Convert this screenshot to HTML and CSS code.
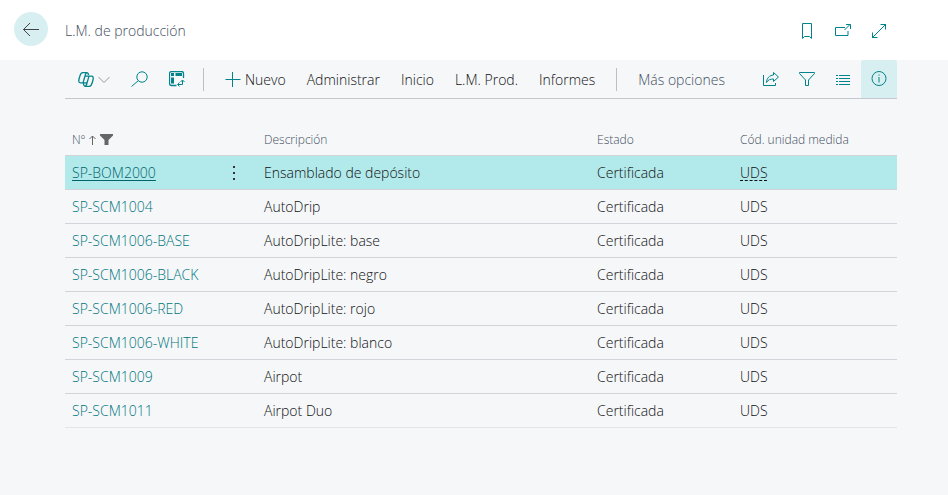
FILE: index.html
```html
<!DOCTYPE html>
<html lang="es">
<head>
	<meta charset="utf-8">
	<meta name="viewport" content="width=device-width, initial-scale=1.0">
	<title>L.M. de producción</title>
	<link rel="stylesheet" href="styles.css">
</head>
<body>
	<header class="page-header">
		<button class="back" aria-label="Atrás">
			<svg width="18" height="16" viewBox="0 0 18 16"><path d="M1.500 8.500H17M8 2L1.500 8.500L8 15"/></svg>
		</button>
		<h1 class="title">L.M. de producción</h1>
		<div class="header-actions">
			<button class="icon" aria-label="Marcador">
				<svg width="16" height="18" viewBox="0 0 16 18"><path d="M3.500 1.500h9v15L10.500 14.500h-5L3.500 16.500z"/></svg>
			</button>
			<button class="icon" aria-label="Abrir en ventana nueva">
				<svg width="16" height="16" viewBox="0 0 16 16"><path d="M10 4.500H.5v8h12.500V8M9.500 7L15 1.500M11 1.500h4.500V6"/></svg>
			</button>
			<button class="icon" aria-label="Expandir">
				<svg width="16" height="16" viewBox="0 0 16 16"><path d="M1 15L15 1M9.500 1.500h5v5M1.500 9.500v5h5"/></svg>
			</button>
		</div>
	</header>

	<main class="content">
		<div class="toolbar">
			<button class="icon copilot" aria-label="Copilot">
				<svg class="logo" width="16" height="15" viewBox="0 0 16 15"><path d="M10.500 3C10.300 1.300 9.800 .7 8.700 .7H4.800C3.200 .7 2.400 2 1.700 4.500C.6 8 0 10.800 2.500 10.800H4.300C5.300 10.800 5.500 9.500 6 7.500L7 4C7.500 2 8 .7 9 .7M5.500 11.500C5.700 13.500 6.200 14.300 7.300 14.300H11.200C12.800 14.300 13.600 13 14.300 10.500C15.400 7 16 4.200 13.500 4.200H11.700C10.700 4.200 10.500 5.500 10 7.500L9 11C8.500 13 8 14.300 7 14.300M7 4.200H11.700M4.300 10.800H9"/></svg>
				<svg class="chevron" width="12" height="8" viewBox="0 0 12 8"><path d="M.5 2L6 7.500L11.500 2"/></svg>
			</button>
			<button class="icon" aria-label="Buscar">
				<svg width="17" height="16" viewBox="0 0 17 16"><circle cx="11" cy="6" r="5.200"/><path d="M7.300 9.700L.5 15.500"/></svg>
			</button>
			<button class="icon" aria-label="Analizar">
				<svg width="16" height="16" viewBox="0 0 16 16"><path class="frame" d="M7.500 14.500H2.500a2 2 0 0 1-2-2V2.500a2 2 0 0 1 2-2h10a2 2 0 0 1 2 2V7"/><path class="solid" d="M2 2h3v3H2zM6.500 2h6.500v3H6.500zM2 6.500h3v6H2z"/><path d="M13.500 9.500v4H9M11.500 11l2-2l2 2M10.500 11.500l-2 2l2 2"/></svg>
			</button>
			<span class="divider start"></span>
			<button class="action new">
				<svg width="16" height="16" viewBox="0 0 16 16"><path d="M.5 7.500h15M7.500 0v15"/></svg>
				Nuevo
			</button>
			<button class="action">Administrar</button>
			<button class="action">Inicio</button>
			<button class="action">L.M. Prod.</button>
			<button class="action">Informes</button>
			<span class="divider"></span>
			<button class="action more">Más opciones</button>
			<div class="toolbar-right">
				<button class="icon" aria-label="Compartir">
					<svg width="16" height="16" viewBox="0 0 16 16"><path d="M.5 4v10.500h12V12M10.500 1.500L15.500 6L10.500 10.500V8C7.500 8 5 8.700 3.500 11.500C3.800 7 6.500 4.300 10.500 4z"/></svg>
				</button>
				<button class="icon" aria-label="Filtrar">
					<svg width="16" height="16" viewBox="0 0 16 16"><path d="M.5 1.500h15v1l-6 6.500v5.500h-3V9L.5 2.500z"/></svg>
				</button>
				<button class="icon" aria-label="Lista">
					<svg width="16" height="16" viewBox="0 0 16 16"><path d="M1 4.500h2M4 4.500h11M1 7.500h2M4 7.500h11M1 10.500h2M4 10.500h11M1 13.500h2M4 13.500h11"/></svg>
				</button>
				<button class="icon info" aria-label="Información">
					<svg width="16" height="16" viewBox="0 0 16 16"><circle cx="8" cy="7.500" r="7"/><path d="M8 6V11.500M8 3.500v1.200"/></svg>
				</button>
			</div>
		</div>

		<table class="list">
			<colgroup>
				<col class="col-no">
				<col class="col-menu">
				<col>
				<col class="col-status">
				<col class="col-unit">
			</colgroup>
			<thead>
				<tr>
					<th scope="col">
						<span class="sorted">Nº
							<svg width="7" height="10" viewBox="0 0 7 10"><path d="M3.500 10V1M.5 4L3.500 1L6.500 4"/></svg>
							<svg class="funnel" width="13" height="11" viewBox="0 0 13 11"><path d="M0 0h13v1.500L8.500 6v5h-4V6L0 1.500z"/></svg>
						</span>
					</th>
					<td></td>
					<th scope="col">Descripción</th>
					<th scope="col">Estado</th>
					<th scope="col">Cód. unidad medida</th>
				</tr>
			</thead>
			<tbody>
				<tr class="selected">
					<td><a href="#">SP-BOM2000</a></td>
					<td>
						<button class="row-menu" aria-label="Mostrar más opciones">
							<svg width="4" height="14" viewBox="0 0 4 14"><path d="M1 0h2v2H1zM1 6h2v2H1zM1 12h2v2H1z"/></svg>
						</button>
					</td>
					<td>Ensamblado de depósito</td>
					<td>Certificada</td>
					<td><span class="lookup">UDS</span></td>
				</tr>
				<tr><td><a href="#">SP-SCM1004</a></td><td></td><td>AutoDrip</td><td>Certificada</td><td>UDS</td></tr>
				<tr><td><a href="#">SP-SCM1006-BASE</a></td><td></td><td>AutoDripLite: base</td><td>Certificada</td><td>UDS</td></tr>
				<tr><td><a href="#">SP-SCM1006-BLACK</a></td><td></td><td>AutoDripLite: negro</td><td>Certificada</td><td>UDS</td></tr>
				<tr><td><a href="#">SP-SCM1006-RED</a></td><td></td><td>AutoDripLite: rojo</td><td>Certificada</td><td>UDS</td></tr>
				<tr><td><a href="#">SP-SCM1006-WHITE</a></td><td></td><td>AutoDripLite: blanco</td><td>Certificada</td><td>UDS</td></tr>
				<tr><td><a href="#">SP-SCM1009</a></td><td></td><td>Airpot</td><td>Certificada</td><td>UDS</td></tr>
				<tr><td><a href="#">SP-SCM1011</a></td><td></td><td>Airpot Duo</td><td>Certificada</td><td>UDS</td></tr>
			</tbody>
		</table>
	</main>
</body>
</html>
```
FILE: styles.css
```css
* {
	box-sizing: border-box;
}

body {
	margin: 0;
	background: #f5f7f9;
	color: #111;
	font: 330 14px/18px "Open Sans", "Noto Sans", sans-serif;
}

button {
	display: flex;
	align-items: center;
	margin: 0;
	padding: 0;
	border: 0;
	background: none;
	color: inherit;
	font: inherit;
	white-space: nowrap;
	cursor: pointer;
}

svg {
	display: block;
	flex: none;
	fill: none;
	stroke: #00838a;
}

/* Header */
.page-header {
	display: flex;
	align-items: center;
	height: 60px;
	padding: 0 61px 2px 14px;
	background: #fff;
}

.back {
	justify-content: center;
	width: 34px;
	height: 34px;
	border-radius: 50%;
	background: #d8eff1;
}

.back svg {
	stroke: #444;
}

.title {
	margin: 0 0 0 17px;
	padding-top: 4px;
	color: #434e5e;
	font-size: 14px;
	font-weight: inherit;
}

.header-actions {
	display: flex;
	gap: 20px;
	margin-left: auto;
	padding-top: 4px;
}

/* Action bar */
.content {
	padding: 0 51px 0 65px;
}

.toolbar {
	display: flex;
	align-items: center;
	gap: 21px;
	height: 39px;
	padding-left: 13px;
	border-bottom: 1px solid #c3c7ce;
}

.copilot {
	gap: 4px;
}

.logo {
	stroke-width: 1.3;
}

.chevron {
	stroke: #999;
}

.frame {
	stroke-width: 1.3;
}

.divider {
	width: 1px;
	height: 23px;
	background: #b9bec8;
}

.start {
	margin-left: -3px;
}

.action {
	padding-top: 2px;
}

.new {
	gap: 4px;
}

.more {
	color: #434e5e;
}

.toolbar-right {
	display: flex;
	align-items: center;
	align-self: stretch;
	gap: 20px;
	margin-left: auto;
}

.info {
	justify-content: center;
	align-self: stretch;
	width: 36px;
	margin-left: -10px;
	border-radius: 2px 2px 0 0;
	background: #d8eff1;
}

.solid {
	fill: #00838a;
	stroke: none;
}

/* List */
.list {
	width: 100%;
	margin-top: 22px;
	border-collapse: collapse;
	table-layout: fixed;
}

.col-no {
	width: 146px;
}

.col-menu {
	width: 46px;
}

.col-status {
	width: 143px;
}

.col-unit {
	width: 164px;
}

.list th,
.list td {
	height: 34px;
	padding: 2px 7px 0;
	border-bottom: 1px solid #d1d4d8;
	text-align: left;
	white-space: nowrap;
}

.list th {
	padding-top: 4px;
	color: #434e5e;
	font-size: 12px;
	font-weight: inherit;
}

.list tbody tr:last-child td {
	border-color: #e3e5e8;
}

.list a {
	color: #00767c;
	text-decoration: none;
}

.selected {
	background: #b2e9eb;
}

.list .selected a {
	color: #00646a;
	text-decoration: underline;
	text-underline-offset: 2px;
}

.sorted {
	display: flex;
	align-items: center;
	gap: 4px;
}

.sorted svg {
	stroke: #666;
}

.sorted .funnel {
	fill: #666;
	stroke: none;
}

.row-menu {
	justify-content: center;
	width: 32px;
	height: 30px;
}

.row-menu svg {
	fill: #333;
	stroke: none;
}

.lookup {
	text-decoration: underline dashed 1px;
	text-underline-offset: 2px;
}
```
